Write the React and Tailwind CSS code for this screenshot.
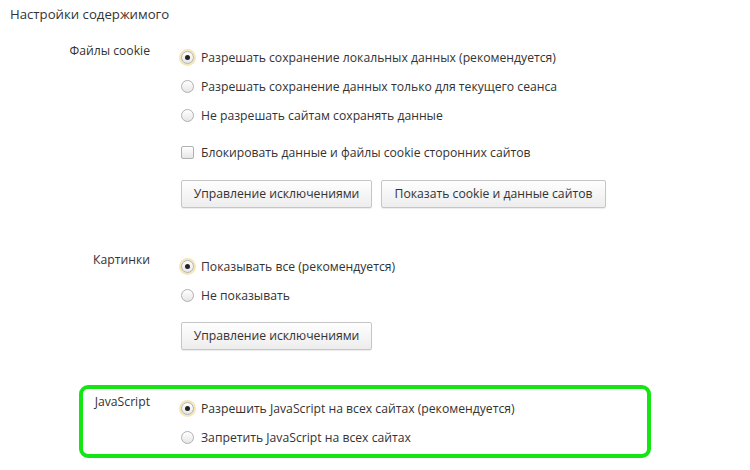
import React from "react"

function Radio({ checked }) {
  return (
    <span
      className={`relative flex h-[13px] w-[13px] shrink-0 items-center justify-center rounded-full border border-[#b0b0b0] bg-gradient-to-b from-white to-[#e6e6e6] ${
        checked ? "shadow-[0_0_0_2px_#f3e7b8]" : ""
      }`}
    >
      {checked && <span className="h-[5px] w-[5px] rounded-full bg-[#222]" />}
    </span>
  )
}

function Checkbox() {
  return (
    <span className="h-[13px] w-[13px] shrink-0 rounded-[2px] border border-[#b0b0b0] bg-gradient-to-b from-white to-[#e6e6e6]" />
  )
}

function Option({ control, children }) {
  return (
    <div className="flex h-[29px] items-center gap-[7px]">
      {control}
      <span>{children}</span>
    </div>
  )
}

function Button({ width, children }) {
  return (
    <button
      className={`flex h-[28px] items-center justify-center rounded-[2px] border border-[#c6c6c6] bg-gradient-to-b from-[#fefefe] to-[#ededed] text-[#333] shadow-[0_1px_1px_rgba(0,0,0,0.08)] ${width}`}
    >
      {children}
    </button>
  )
}

export default function App() {
  return (
    <div
      className="min-h-[470px] w-[750px] bg-white text-[12.2px] leading-[14px] text-[#333]"
      style={{ fontFamily: '"Open Sans", "Noto Sans", sans-serif' }}
    >
      <div className="pl-[10px] pt-[5px] text-[13.2px] leading-[18px]">Настройки содержимого</div>

      {/* Cookies */}
      <div className="mt-[20px] grid grid-cols-[150px_1fr] gap-x-[31px]">
        <div className="pt-[1px] text-right">Файлы cookie</div>
        <div>
          <Option control={<Radio checked />}>Разрешать сохранение локальных данных (рекомендуется)</Option>
          <Option control={<Radio />}>Разрешать сохранение данных только для текущего сеанса</Option>
          <Option control={<Radio />}>Не разрешать сайтам сохранять данные</Option>
          <div className="mt-[8px]">
            <Option control={<Checkbox />}>Блокировать данные и файлы cookie сторонних сайтов</Option>
          </div>
          <div className="mt-[13px] flex gap-[9px]">
            <Button width="w-[191px]">Управление исключениями</Button>
            <Button width="w-[225px]">Показать cookie и данные сайтов</Button>
          </div>
        </div>
      </div>

      {/* Images */}
      <div className="mt-[44px] grid grid-cols-[150px_1fr] gap-x-[31px]">
        <div className="pt-[1px] text-right">Картинки</div>
        <div>
          <Option control={<Radio checked />}>Показывать все (рекомендуется)</Option>
          <Option control={<Radio />}>Не показывать</Option>
          <div className="mt-[12px] flex">
            <Button width="w-[191px]">Управление исключениями</Button>
          </div>
        </div>
      </div>

      {/* JavaScript */}
      <div className="ml-[79px] mt-[35px] w-[572px] rounded-[9px] border-4 border-[#14e614] pb-[2px] pt-[5px]">
        <div className="grid grid-cols-[67px_1fr] gap-x-[31px]">
          <div className="pt-[1px] text-right">JavaScript</div>
          <div>
            <Option control={<Radio checked />}>Разрешить JavaScript на всех сайтах (рекомендуется)</Option>
            <Option control={<Radio />}>Запретить JavaScript на всех сайтах</Option>
          </div>
        </div>
      </div>
    </div>
  )
}
